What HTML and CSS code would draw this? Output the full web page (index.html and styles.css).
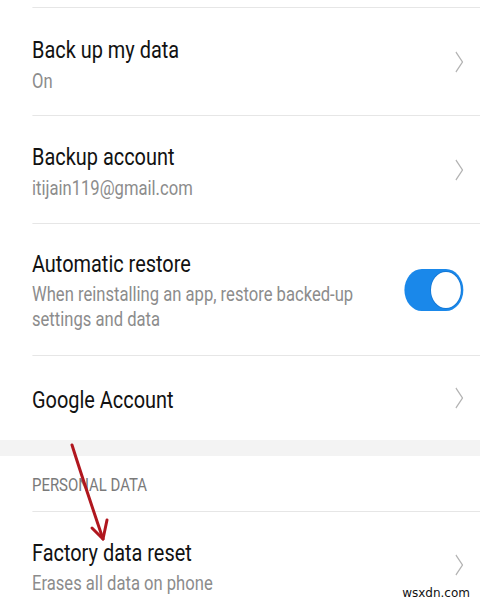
FILE: index.html
```html
<!DOCTYPE html>
<html lang="en">
<head>
<meta charset="utf-8">
<title>Backup &amp; reset</title>
<link rel="stylesheet" href="styles.css">
</head>
<body>
<div class="frame">
<div class="screen">
  <div class="stub"></div>

  <div class="row">
    <div class="text t1">
      <div class="title">Back up my data</div>
      <div class="sub">On</div>
    </div>
    <svg class="chev" viewBox="0 0 10 22" width="10" height="22"><polyline points="1,1 9,11 1,21"/></svg>
  </div>

  <div class="row">
    <div class="text t2">
      <div class="title">Backup account</div>
      <div class="sub">itijain119@gmail.com</div>
    </div>
    <svg class="chev" viewBox="0 0 10 22" width="10" height="22"><polyline points="1,1 9,11 1,21"/></svg>
  </div>

  <div class="row">
    <div class="text t3">
      <div class="title">Automatic restore</div>
      <div class="sub desc">When reinstalling an app, restore backed-up settings and data</div>
    </div>
    <div class="toggle"><span class="knob"></span></div>
  </div>

  <div class="row last">
    <div class="text t4">
      <div class="title">Google Account</div>
    </div>
    <svg class="chev" viewBox="0 0 10 22" width="10" height="22"><polyline points="1,1 9,11 1,21"/></svg>
  </div>

  <div class="band"></div>

  <div class="section">PERSONAL DATA</div>

  <div class="row last">
    <div class="text t5">
      <div class="title">Factory data reset</div>
      <div class="sub">Erases all data on phone</div>
    </div>
    <svg class="chev low" viewBox="0 0 10 22" width="10" height="22"><polyline points="1,1 9,11 1,21"/></svg>
  </div>
</div>
</div>

<svg class="arrow" width="60" height="110" viewBox="0 0 60 110">
  <path d="M2 2 Q14 40 33 96" />
  <path d="M22 85 L33 96 L37 77" />
</svg>

<div class="watermark">wsxdn.com</div>
</body>
</html>
```

FILE: styles.css
```css
html, body {
  margin: 0;
  padding: 0;
  width: 480px;
  height: 604px;
  overflow: hidden;
  background: #ffffff;
}

body {
  position: relative;
  font-family: Roboto, "Noto Sans", "Liberation Sans", sans-serif;
  color: #141414;
}

.frame {
  width: 480px;
  height: 604px;
  overflow: hidden;
}

.screen {
  width: 578px;
  transform: scaleX(0.8304);
  transform-origin: 0 0;
}

.stub {
  height: 7px;
  margin-left: 38.5px;
  border-bottom: 1px solid #e6e6e6;
}

.row {
  display: flex;
  align-items: center;
  margin-left: 38.5px;
  padding-right: 20.5px;
  border-bottom: 1px solid #e6e6e6;
}

.row.last {
  border-bottom: none;
}

.text {
  flex: 1;
  min-width: 0;
}

.t1 { padding: 27px 0 21px; }
.t2 { padding: 26px 0 22px; }
.t3 { padding: 25px 0 23px; }
.t4 { padding: 29px 0 25px; }
.t5 { padding: 26px 0 8px; }

.title {
  font-size: 24px;
  line-height: 30px;
  color: #121212;
}

.sub {
  margin-top: 3px;
  font-size: 20px;
  line-height: 26px;
  color: #8c8c8c;
}

.t5 .sub {
  margin-top: 2px;
}

.desc {
  line-height: 25px;
  max-width: 440px;
}

.chev {
  flex: none;
  fill: none;
  stroke: #b3b3b3;
  stroke-width: 1.4;
}

.chev.low {
  align-self: flex-end;
  margin-bottom: 28px;
}

.toggle {
  flex: none;
  width: 71px;
  height: 42px;
  border-radius: 21px;
  background: #1a88ea;
  display: flex;
  align-items: center;
  justify-content: flex-end;
  padding-right: 3px;
  box-sizing: border-box;
}

.knob {
  width: 36px;
  height: 36px;
  border-radius: 50%;
  background: #ffffff;
  box-shadow: 0 0 0 1px #1478d6;
}

.band {
  height: 16px;
  background: #f3f3f3;
}

.section {
  margin-left: 38.5px;
  padding: 17px 0 14px;
  font-size: 18px;
  line-height: 24px;
  color: #7a7a7a;
  border-bottom: 1px solid #e6e6e6;
}

.arrow {
  position: absolute;
  left: 70px;
  top: 443px;
  fill: none;
  stroke: #b0161e;
  stroke-width: 3;
  stroke-linecap: round;
  stroke-linejoin: round;
}

.watermark {
  position: absolute;
  right: 10px;
  top: 586px;
  font-family: "DejaVu Sans", Verdana, sans-serif;
  font-size: 12px;
  line-height: 14px;
  color: #111111;
  background: #ffffff;
}
```
